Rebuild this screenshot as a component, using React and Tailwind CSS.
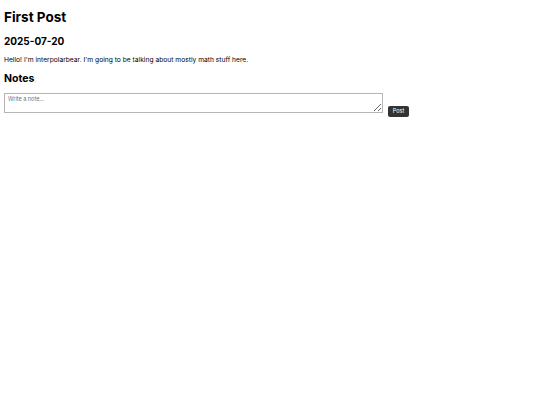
export default function App() {
  return (
    <div className="px-[4px] pt-[8px] text-black" style={{ fontFamily: "Inter, sans-serif" }}>
      <h1 className="text-[13.5px] font-bold leading-[18px]">First Post</h1>
      <h2 className="mt-[9px] text-[10px] font-bold leading-[13px]">2025-07-20</h2>
      <p className="mt-[8px] text-[6.7px] leading-[9px]">
        Hello! I'm interpolarbear. I'm going to be talking about mostly math stuff here.
      </p>
      <h3 className="mt-[7px] text-[10.5px] font-bold leading-[14px]">Notes</h3>
      <div className="mt-[7px] flex items-start gap-[5px]">
        <textarea
          placeholder="Write a note..."
          className="block h-[20px] w-[379px] border border-[#b5b5b5] px-[3px] py-[2px] text-[5.5px] leading-[7px] placeholder:text-gray-500"
        />
        <button className="mt-[13px] flex h-[11px] w-[21px] items-center justify-center rounded-[2px] bg-[#333] text-[5.5px] text-white">
          Post
        </button>
      </div>
    </div>
  );
}
